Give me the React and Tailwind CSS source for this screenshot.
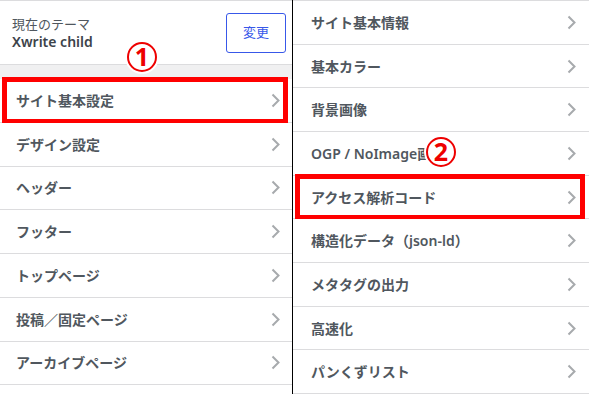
import React from "react";

const font = { fontFamily: '"Noto Sans", "Noto Sans CJK JP", sans-serif' };

const leftItems = [
  "デザイン設定",
  "ヘッダー",
  "フッター",
  "トップページ",
  "投稿／固定ページ",
  "アーカイブページ",
];

const rightItems = [
  "サイト基本情報",
  "基本カラー",
  "背景画像",
  "OGP / NoImage画像",
  "アクセス解析コード",
  "構造化データ（json-ld）",
  "メタタグの出力",
  "高速化",
  "パンくずリスト",
];

function Chevron() {
  return (
    <svg width="9" height="15" viewBox="0 0 9 15" className="shrink-0">
      <polyline
        points="1.5,1.5 7.5,7.5 1.5,13.5"
        fill="none"
        stroke="#a7aaad"
        strokeWidth="2"
      />
    </svg>
  );
}

function Row({ label, pl, pr, highlight }) {
  return (
    <div
      className={`relative flex h-[43.75px] items-center justify-between border-b border-[#dcdcde] bg-white ${pl} ${pr}`}
    >
      <span className="text-[14px] font-semibold text-[#50575e] whitespace-nowrap">
        {label}
      </span>
      <Chevron />
      {highlight && (
        <div className="absolute -top-[2px] -bottom-[2px] left-[2px] right-[4px] border-[5px] border-[#ff0000]" />
      )}
    </div>
  );
}

function Badge({ n, className }) {
  return (
    <div
      className={`absolute flex h-[30px] w-[30px] items-center justify-center rounded-full border-2 border-[#ee0000] bg-white pb-[1px] text-[25px] font-bold leading-none text-[#ee0000] ring-2 ring-white ${className}`}
    >
      {n}
    </div>
  );
}

export default function App() {
  return (
    <div
      className="relative flex h-[394px] w-[589px] overflow-hidden bg-white"
      style={font}
    >
      <div className="flex w-[293px] shrink-0 flex-col border-r border-black">
        <div className="flex h-[64px] items-center justify-between border-t border-[#dcdcde] bg-white pl-[12px] pr-[6px]">
          <div className="flex flex-col leading-[18px]">
            <span className="text-[13px] text-[#50575e]">現在のテーマ</span>
            <span className="text-[14px] font-semibold text-[#3c434a]">
              Xwrite child
            </span>
          </div>
          <button className="h-[40px] w-[60px] rounded-[3px] border border-[#3858e9] bg-white text-[13px] text-[#3858e9]">
            変更
          </button>
        </div>
        <div className="h-[15px] border-t border-[#dcdcde] bg-[#f0f0f1]" />
        <Row label="サイト基本設定" pl="pl-[16px]" pr="pr-[12px]" highlight />
        {leftItems.map((l) => (
          <Row key={l} label={l} pl="pl-[16px]" pr="pr-[12px]" />
        ))}
      </div>
      <div className="flex flex-1 flex-col border-t border-[#dcdcde]">
        {rightItems.map((l, i) => (
          <Row
            key={l}
            label={l}
            pl="pl-[18px]"
            pr="pr-[13px]"
            highlight={i === 4}
          />
        ))}
      </div>
      <Badge n="1" className="left-[127px] top-[42px]" />
      <Badge n="2" className="left-[426px] top-[137px]" />
    </div>
  );
}
